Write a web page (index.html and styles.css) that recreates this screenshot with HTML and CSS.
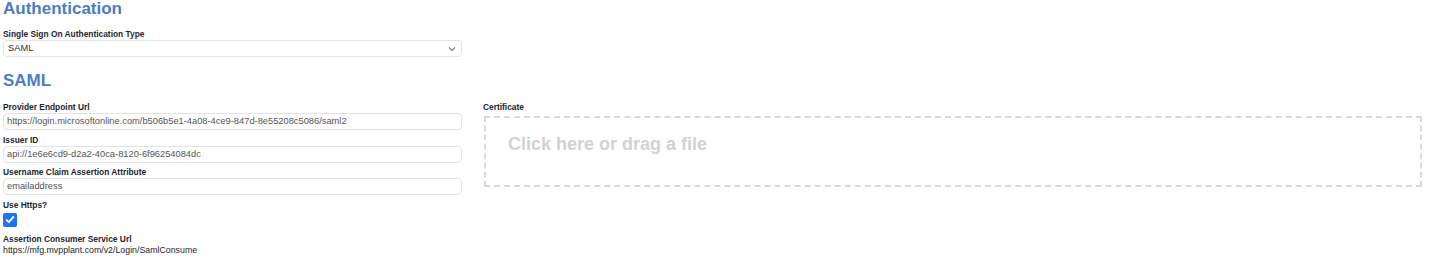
FILE: index.html
```html
<!DOCTYPE html>
<html lang="en">

<head>
    <meta charset="UTF-8">
    <meta name="viewport" content="width=device-width, initial-scale=1.0">
    <title>Authentication Settings</title>
    <link rel="stylesheet" href="styles.css">
</head>

<body>
    <div class="settings">
        <h2 class="section-title">Authentication</h2>
        <div class="field first">
            <label class="field-label">Single Sign On Authentication Type</label>
            <div class="select-box">
                <span>SAML</span>
                <svg class="chevron" width="8" height="6" viewBox="0 0 8 6">
                    <path d="M1 1.5 L4 4.5 L7 1.5" fill="none" stroke="#777" stroke-width="1.1" />
                </svg>
            </div>
        </div>

        <h2 class="section-title saml">SAML</h2>
        <div class="saml-grid">
            <div class="saml-left">
                <div class="field">
                    <label class="field-label">Provider Endpoint Url</label>
                    <div class="input-field">https://login.microsoftonline.com/b506b5e1-4a08-4ce9-847d-8e55208c5086/saml2</div>
                </div>
                <div class="field">
                    <label class="field-label">Issuer ID</label>
                    <div class="input-field">api://1e6e6cd9-d2a2-40ca-8120-6f96254084dc</div>
                </div>
                <div class="field">
                    <label class="field-label">Username Claim Assertion Attribute</label>
                    <div class="input-field">emailaddress</div>
                </div>
                <div class="field">
                    <label class="field-label">Use Https?</label>
                    <div class="checkbox">
                        <svg width="10" height="9" viewBox="0 0 10 9">
                            <path d="M1.2 4.6 L3.9 7.2 L8.8 1.4" fill="none" stroke="#fff" stroke-width="1.8" />
                        </svg>
                    </div>
                </div>
                <div class="field">
                    <label class="field-label">Assertion Consumer Service Url</label>
                    <div class="static-value">https://mfg.mvpplant.com/v2/Login/SamlConsume</div>
                </div>
            </div>

            <div class="saml-right">
                <label class="field-label">Certificate</label>
                <div class="dropzone">Click here or drag a file</div>
            </div>
        </div>
    </div>
</body>

</html>
```

FILE: styles.css
```css
* {
    margin: 0;
    padding: 0;
    box-sizing: border-box;
}

body {
    font-family: 'Liberation Sans', Arial, Helvetica, sans-serif;
    background: #fff;
    color: #1d2630;
}

.settings {
    padding: 0 10px 0 3px;
}

.section-title {
    font-size: 17px;
    line-height: 18px;
    font-weight: 700;
    color: #4d7dbf;
}

.section-title.saml {
    margin-top: 15px;
}

.field-label {
    display: block;
    font-size: 8.4px;
    line-height: 11px;
    font-weight: 700;
    color: #1d2630;
}

.field.first {
    width: 459px;
    margin-top: 11px;
}

.field {
    margin-bottom: 4.5px;
}

.select-box,
.input-field {
    height: 17px;
    border: 1px solid #e3e3e3;
    border-radius: 4px;
    font-size: 9.3px;
    line-height: 15px;
    padding: 0 3px;
    color: #555;
    background: #fff;
    white-space: nowrap;
    overflow: hidden;
}

.select-box {
    display: flex;
    align-items: center;
    justify-content: space-between;
    color: #333;
    padding: 0 5px 0 4px;
}

.chevron {
    display: block;
}

.saml-grid {
    display: grid;
    grid-template-columns: 459px 1fr;
    column-gap: 21px;
    margin-top: 12px;
}

.checkbox {
    width: 14px;
    height: 14px;
    margin-top: 2px;
    margin-bottom: 7px;
    border-radius: 2px;
    background: #1f74f0;
    display: flex;
    align-items: center;
    justify-content: center;
}

.static-value {
    font-size: 8.8px;
    line-height: 11px;
    color: #1d2630;
}

.saml-right .field-label {
    margin-bottom: 3px;
}

.dropzone {
    height: 71px;
    margin-left: 1px;
    border: 2px dashed #d9d9d9;
    padding: 16px 22px;
    font-size: 18px;
    line-height: 20px;
    font-weight: 700;
    color: #d2d2d2;
    cursor: pointer;
}
```
